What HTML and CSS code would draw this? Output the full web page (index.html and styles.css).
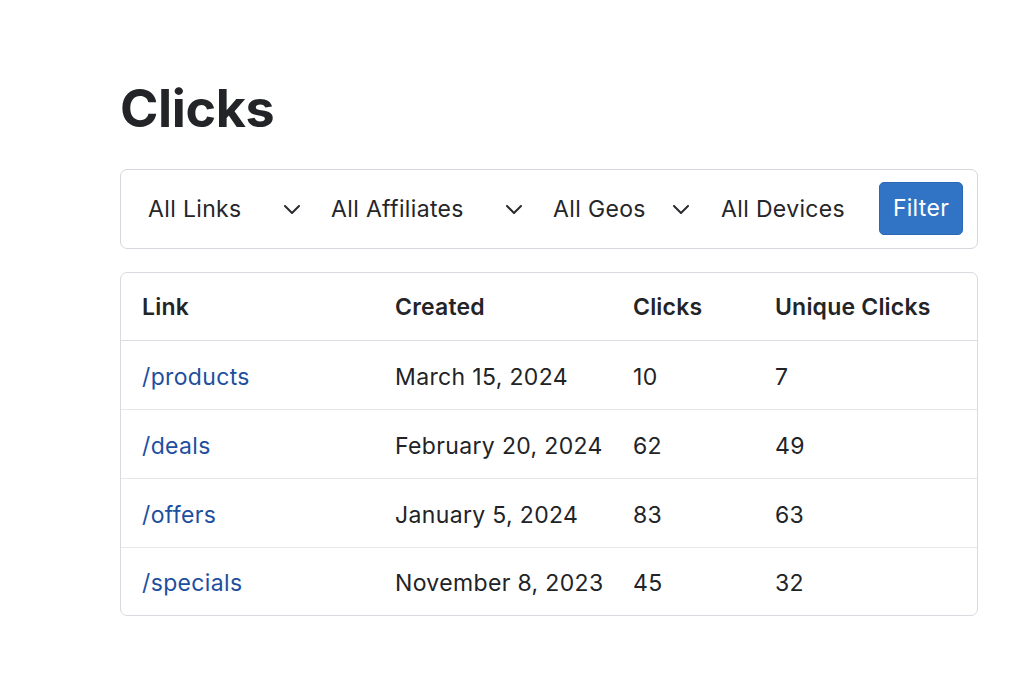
FILE: index.html
```html
<!DOCTYPE html>
<html lang="en">
<head>
<meta charset="utf-8">
<title>Clicks</title>
<link rel="stylesheet" href="styles.css">
</head>
<body>
<main class="page">
  <h1 class="title">Clicks</h1>
  <form class="filters">
    <div class="select sel-links"><span>All Links</span><svg class="chev" viewBox="0 0 16 9"><path d="M1 1l7 7 7-7"/></svg></div>
    <div class="select sel-aff"><span>All Affiliates</span><svg class="chev" viewBox="0 0 16 9"><path d="M1 1l7 7 7-7"/></svg></div>
    <div class="select sel-geo"><span>All Geos</span><svg class="chev" viewBox="0 0 16 9"><path d="M1 1l7 7 7-7"/></svg></div>
    <div class="select sel-dev"><span>All Devices</span></div>
    <button type="button" class="btn">Filter</button>
  </form>
  <section class="card">
    <div class="row head">
      <div class="cell">Link</div>
      <div class="cell">Created</div>
      <div class="cell">Clicks</div>
      <div class="cell">Unique Clicks</div>
    </div>
    <div class="row">
      <div class="cell"><a class="link" href="#">/products</a></div>
      <div class="cell">March 15, 2024</div>
      <div class="cell">10</div>
      <div class="cell">7</div>
    </div>
    <div class="row">
      <div class="cell"><a class="link" href="#">/deals</a></div>
      <div class="cell">February 20, 2024</div>
      <div class="cell">62</div>
      <div class="cell">49</div>
    </div>
    <div class="row">
      <div class="cell"><a class="link" href="#">/offers</a></div>
      <div class="cell">January 5, 2024</div>
      <div class="cell">83</div>
      <div class="cell">63</div>
    </div>
    <div class="row">
      <div class="cell"><a class="link" href="#">/specials</a></div>
      <div class="cell">November 8, 2023</div>
      <div class="cell">45</div>
      <div class="cell">32</div>
    </div>
  </section>
</main>
</body>
</html>
```

FILE: styles.css
```css
* { box-sizing: border-box; }
html, body { margin: 0; background: #ffffff; }
body {
  font-family: Inter, "Noto Sans", "Liberation Sans", sans-serif;
  color: #222326;
}
.page {
  width: 858px;
  margin-left: 120px;
  padding-top: 79px;
}
.title {
  margin: 0;
  font-size: 52px;
  line-height: 60px;
  font-weight: 700;
  letter-spacing: -0.4px;
  color: #232427;
}
.filters {
  margin-top: 30px;
  height: 80px;
  border: 1px solid #d6d7dc;
  border-radius: 7px;
  display: grid;
  grid-template-columns: 152px 191px 136px 1fr auto;
  column-gap: 31px;
  align-items: center;
  padding: 0 14px 0 27px;
}
.select {
  display: flex;
  align-items: center;
  justify-content: space-between;
  font-size: 23px;
  letter-spacing: 0.35px;
  color: #25262a;
}
.sel-dev { padding-left: 1px; }
.chev {
  width: 16px;
  height: 9px;
  fill: none;
  stroke: #2a2b2f;
  stroke-width: 2;
  stroke-linecap: round;
  stroke-linejoin: round;
}
.btn {
  width: 84px;
  height: 53px;
  margin-bottom: 2px;
  border: 1px solid #2b68b4;
  border-radius: 5px;
  background: #3174c6;
  color: #ffffff;
  font: inherit;
  font-size: 23px;
  letter-spacing: 0.3px;
  padding: 0;
}
.card {
  margin-top: 23px;
  border: 1px solid #d9dadf;
  border-radius: 7px;
  overflow: hidden;
}
.row {
  display: grid;
  grid-template-columns: 253px 238px 142px 1fr;
  height: 69px;
  align-items: center;
  border-top: 1px solid #e6e7eb;
  font-size: 23px;
  letter-spacing: 0.35px;
  padding-top: 3px;
}
.row:last-child { height: 68px; }
.row.head {
  border-top: none;
  height: 68px;
  padding-top: 1px;
  font-weight: 600;
  letter-spacing: 0.2px;
  color: #232427;
  border-bottom: 1px solid #dcdde2;
}
.row.head + .row { border-top: none; height: 68px; }
.cell { padding-left: 21px; white-space: nowrap; }
.link { color: #1e4f9f; text-decoration: none; }
```
